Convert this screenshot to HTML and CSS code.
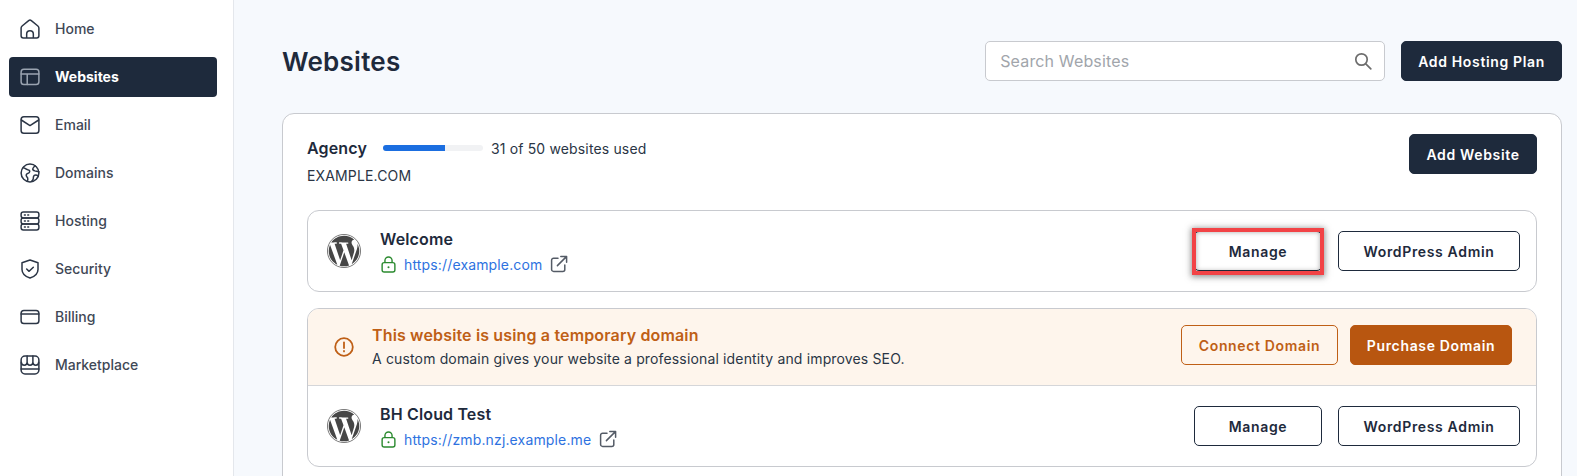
FILE: index.html
```html
<!DOCTYPE html>
<html lang="en">
<head>
<meta charset="utf-8">
<title>Websites</title>
<link rel="stylesheet" href="styles.css">
</head>
<body>
<svg class="sprite" aria-hidden="true">
  <symbol id="wp" viewBox="0 0 24 24"><circle cx="12" cy="12" r="11.700" fill="none" stroke="currentColor" stroke-width=".5"/><path fill="currentColor" d="M21.469 6.825c.84 1.537 1.318 3.3 1.318 5.175 0 3.979-2.156 7.456-5.363 9.325l3.295-9.527c.615-1.54.82-2.771.82-3.864 0-.405-.026-.78-.07-1.11m-7.981.105c.647-.03 1.232-.105 1.232-.105.582-.075.514-.93-.067-.899 0 0-1.755.135-2.88.135-1.064 0-2.85-.15-2.85-.15-.585-.03-.661.855-.075.885 0 0 .54.061 1.125.09l1.68 4.605-2.37 7.08L5.354 6.9c.649-.03 1.234-.1 1.234-.1.585-.075.516-.93-.065-.896 0 0-1.746.138-2.874.138-.2 0-.438-.008-.69-.015C4.911 3.15 8.235 1.215 12 1.215c2.809 0 5.365 1.072 7.286 2.833-.046-.003-.091-.009-.141-.009-1.06 0-1.812.923-1.812 1.914 0 .89.513 1.643 1.06 2.531.411.72.89 1.643.89 2.977 0 .915-.354 1.994-.821 3.479l-1.075 3.585-3.9-11.61.001.014zM12 22.784c-1.059 0-2.081-.153-3.048-.437l3.237-9.406 3.315 9.087c.024.053.05.101.078.149-1.12.393-2.325.609-3.582.609M1.211 12c0-1.564.336-3.05.935-4.39L7.29 21.709C3.694 19.96 1.212 16.271 1.211 12"/></symbol>
  <symbol id="lock" viewBox="0 0 16 18"><rect x="1.200" y="7" width="13.600" height="10" rx="2.200" fill="none" stroke="currentColor" stroke-width="1.500"/><path d="M4.200 7V4.800a3.800 3.800 0 0 1 7.600 0V7" fill="none" stroke="currentColor" stroke-width="1.500"/><circle cx="8" cy="12" r="1.100" fill="currentColor"/></symbol>
  <symbol id="ext" viewBox="0 0 18 18"><path d="M8 3.200H3.600A2 2 0 0 0 1.600 5.200v9.200a2 2 0 0 0 2 2h9.200a2 2 0 0 0 2-2V10M7.400 10.600 16.400 1.600M10.800 1.400h5.800v5.800" fill="none" stroke="currentColor" stroke-width="1.500" stroke-linecap="round" stroke-linejoin="round"/></symbol>
</svg>

<div class="app">
  <aside class="sidebar">
    <nav class="nav">
      <a class="nav-item"><svg class="nav-icon" viewBox="0 0 18 18"><path d="M1 8.200c0-.8.300-1.400.9-1.900L7.800 1.400a1.900 1.900 0 0 1 2.400 0l5.900 4.900c.6.500.9 1.100.9 1.900v6.800a2 2 0 0 1-2 2H3a2 2 0 0 1-2-2ZM6 17v-3.500a3 3 0 0 1 6 0V17"/></svg><span>Home</span></a>
      <a class="nav-item active"><svg class="nav-icon" viewBox="0 0 18 18"><rect x="1" y="2" width="16" height="13.800" rx="2.500"/><path d="M1 6.200h16M6.500 6.200v9.600"/></svg><span>Websites</span></a>
      <a class="nav-item"><svg class="nav-icon" viewBox="0 0 18 18"><rect x="1" y="1.500" width="16" height="15" rx="2.500"/><path d="m1.200 4.500 7.800 5 7.800-5"/></svg><span>Email</span></a>
      <a class="nav-item"><svg class="nav-icon" viewBox="0 0 18 18"><circle cx="9" cy="9" r="8"/><path d="M2.800 4c1.500.6 2.600 1.700 4.200 2 1.600.2 2.200 1.200 1.400 2.400-.7 1.100-2.400 1-2.800 2.300-.3 1.200.8 1.700 1.300 2.700.3.800.1 1.900-.3 3M13.600 2.500c-1 1.100-1.800 1.600-2.100 2.800-.2 1 .8 1.500 1.900 1.800 1.300.3 2.400.3 3.600.7M16.500 11.800c-1.200-.9-2.900-1.300-3.900-.4-1 1-.3 2-.8 3.200-.2.700-.8 1.300-1.300 1.800"/></svg><span>Domains</span></a>
      <a class="nav-item"><svg class="nav-icon" viewBox="0 0 18 18"><rect x="1" y="1" width="16" height="5.300" rx="2"/><rect x="1" y="6.300" width="16" height="5.400" rx="2"/><rect x="1" y="11.700" width="16" height="5.300" rx="2"/><path d="M4 3.600h.8M7 3.600h.8M4 9h.8M7 9h.8M4 14.400h.8M7 14.400h.8"/></svg><span>Hosting</span></a>
      <a class="nav-item"><svg class="nav-icon" viewBox="0 0 18 18"><path d="M9 .9 16.200 3.400v6c0 3.800-3 6.300-7.200 7.700-4.200-1.400-7.200-3.900-7.200-7.700v-6Z"/><path d="m6 9 2.200 2.100L12 7.400"/></svg><span>Security</span></a>
      <a class="nav-item"><svg class="nav-icon" viewBox="0 0 18 18"><rect x="1" y="3.200" width="16" height="11.600" rx="2.500"/><path d="M1 6.400h16"/></svg><span>Billing</span></a>
      <a class="nav-item"><svg class="nav-icon" viewBox="0 0 18 18"><rect x="1" y="1" width="16" height="16" rx="3.500"/><path d="M1.200 6.600a2.600 2.600 0 0 0 5.200 0 2.600 2.600 0 0 0 5.200 0 2.600 2.600 0 0 0 5.200 0M6.400 1v5.600M11.600 1v5.600M1 12.500h16"/></svg><span>Marketplace</span></a>
    </nav>
  </aside>

  <main class="main">
    <header class="page-head">
      <h1 class="page-title">Websites</h1>
      <div class="head-actions">
        <div class="search">
          <span class="search-text">Search Websites</span>
          <svg class="search-icon" viewBox="0 0 18 18"><circle cx="7.500" cy="7.500" r="5.700"/><path d="m11.800 11.800 5 5"/></svg>
        </div>
        <button class="btn btn-dark">Add Hosting Plan</button>
      </div>
    </header>

    <section class="plan">
      <div class="plan-head">
        <div class="plan-info">
          <div class="plan-usage">
            <strong class="plan-name">Agency</strong>
            <span class="bar"><span class="bar-fill"></span></span>
            <span class="usage-text">31 of 50 websites used</span>
          </div>
          <div class="plan-domain">EXAMPLE.COM</div>
        </div>
        <button class="btn btn-dark btn-wide">Add Website</button>
      </div>

      <article class="site site-open">
        <div class="site-row">
          <svg class="wp-logo"><use href="#wp"/></svg>
          <div class="site-info">
            <div class="site-name">Welcome</div>
            <div class="site-url">
              <svg class="lock"><use href="#lock"/></svg>
              <a class="url">https://example.com</a>
              <svg class="ext"><use href="#ext"/></svg>
            </div>
          </div>
          <div class="site-actions">
            <button class="btn btn-line btn-wide btn-marked">Manage</button>
            <button class="btn btn-line btn-admin">WordPress Admin</button>
          </div>
        </div>
      </article>

      <article class="site">
        <div class="notice">
          <svg class="notice-icon" viewBox="0 0 20 20"><circle cx="10" cy="10" r="8.800"/><path d="M10 5.500v5.500"/><path d="M10 14v.4"/></svg>
          <div class="notice-text">
            <div class="notice-title">This website is using a temporary domain</div>
            <div class="notice-sub">A custom domain gives your website a professional identity and improves SEO.</div>
          </div>
          <div class="notice-actions">
            <button class="btn btn-orange-line">Connect Domain</button>
            <button class="btn btn-orange">Purchase Domain</button>
          </div>
        </div>
        <div class="site-row">
          <svg class="wp-logo"><use href="#wp"/></svg>
          <div class="site-info">
            <div class="site-name">BH Cloud Test</div>
            <div class="site-url">
              <svg class="lock"><use href="#lock"/></svg>
              <a class="url">https://zmb.nzj.example.me</a>
              <svg class="ext"><use href="#ext"/></svg>
            </div>
          </div>
          <div class="site-actions">
            <button class="btn btn-line btn-wide">Manage</button>
            <button class="btn btn-line btn-admin">WordPress Admin</button>
          </div>
        </div>
      </article>
    </section>
  </main>
</div>
</body>
</html>
```

FILE: styles.css
```css
* { box-sizing: border-box; }
html, body { margin: 0; height: 476px; overflow: hidden; }
body {
  font-family: Inter, "Liberation Sans", sans-serif;
  color: #1e2a3c;
  background: #f6f9fd;
  letter-spacing: .15px;
}
.sprite { display: none; }
.app { display: flex; height: 476px; overflow: hidden; }

.sidebar {
  flex: 0 0 234px;
  background: #fff;
  border-right: 1px solid #e4e7ec;
  padding: 9px 16px 0 9px;
}
.nav { display: flex; flex-direction: column; gap: 8px; }
.nav-item {
  display: flex;
  align-items: center;
  gap: 15px;
  height: 40px;
  padding-left: 11px;
  border-radius: 4px;
  font-size: 14px;
  font-weight: 500;
  letter-spacing: 0;
  color: #3f4856;
}
.nav-item span { margin-bottom: 2px; }
.nav-icon {
  width: 20px;
  height: 20px;
  flex: none;
  fill: none;
  stroke: #2c3646;
  stroke-width: 1.350;
  stroke-linecap: round;
  stroke-linejoin: round;
}
.active { background: #1e2a3c; color: #fff; font-weight: 700; }
.active .nav-icon { stroke: #9aa3b0; }

.main { flex: 1; padding: 41px 15px 0 48px; min-width: 0; }
.page-head { display: flex; justify-content: space-between; align-items: center; height: 40px; }
.page-title { margin: 2px 0 0; font-size: 26px; line-height: 38px; font-weight: 600; letter-spacing: .25px; color: #1e2a3c; }
.head-actions { display: flex; gap: 16px; }
.search {
  display: flex;
  align-items: center;
  justify-content: space-between;
  width: 400px;
  height: 40px;
  padding: 0 12px 0 14px;
  background: #fff;
  border: 1px solid #c8cacf;
  border-radius: 5px;
}
.search-text { font-size: 16px; color: #a1a5ab; }
.search-icon { width: 18px; height: 18px; fill: none; stroke: #6d6d6d; stroke-width: 1.700; stroke-linecap: round; }

.btn {
  height: 40px;
  padding: 0 16px;
  border-radius: 5px;
  font-family: inherit;
  font-size: 14px;
  font-weight: 600;
  letter-spacing: .65px;
  white-space: nowrap;
}
.btn-dark { background: #1e2a3c; border: 1px solid #1e2a3c; color: #fff; }
.btn-wide { width: 128px; }
.btn-line { background: #fff; border: 1px solid #1e2a3c; color: #1e2a3c; padding: 0 12px; }
.btn-admin { width: 182px; }
.btn-orange-line { background: transparent; border: 1px solid #bf5f16; color: #bf5f16; width: 157px; padding: 0; }
.btn-orange { background: #b85610; border: 1px solid #b85610; color: #fff; width: 162px; padding: 0; }
.btn-marked { position: relative; }
.btn-marked::after {
  content: "";
  position: absolute;
  inset: -4px -3px -5px;
  border: 4px solid #f24346;
  box-shadow: 0 1px 6px 1px rgba(40, 40, 40, .5), inset 0 0 5px rgba(40, 40, 40, .4);
}

.plan {
  margin-top: 32px;
  height: 420px;
  padding: 20px 24px;
  background: #fff;
  border: 1px solid #c8cacf;
  border-radius: 12px;
}
.plan-head { display: flex; justify-content: space-between; align-items: flex-start; height: 40px; margin-bottom: 36px; }
.plan-usage { display: flex; align-items: center; height: 28px; }
.plan-name { font-size: 16px; font-weight: 600; width: 76px; }
.bar { width: 100px; height: 6px; border-radius: 3px; background: #f1f2f4; overflow: hidden; }
.bar-fill { display: block; width: 62%; height: 100%; background: #1b6ee0; }
.usage-text { margin-left: 8px; font-size: 14px; color: #2a3545; }
.plan-domain { margin-top: 3px; font-size: 14px; line-height: 22px; color: #2a3545; }

.site { border: 1px solid #c8cacf; border-radius: 12px; overflow: hidden; margin-bottom: 16px; }
.site-open { overflow: visible; }
.site-row { display: flex; align-items: center; padding: 17px 16px 17px 19px; }
.wp-logo { width: 34px; height: 34px; color: #464646; flex: none; }
.site-info { margin-left: 19px; flex: 1; }
.site-name { font-size: 16px; font-weight: 600; line-height: 22px; color: #1e2a3c; }
.site-url { display: flex; align-items: center; margin-top: 4px; height: 20px; }
.lock { width: 15px; height: 17px; color: #2b8a2f; margin: 0 8px 0 1px; }
.url { font-size: 14px; color: #2e72df; }
.ext { width: 18px; height: 18px; color: #545b66; margin-left: 8px; }
.site-actions { display: flex; gap: 16px; }

.notice {
  display: flex;
  align-items: center;
  padding: 15px 24px 15px 26px;
  background: #fef5ec;
  border-bottom: 1px solid #d5d6d9;
}
.notice-icon { width: 20px; height: 20px; fill: none; stroke: #bf5f16; stroke-width: 1.800; stroke-linecap: round; flex: none; }
.notice-text { margin-left: 18px; flex: 1; }
.notice-title { font-size: 16px; line-height: 22px; font-weight: 600; color: #bf5f16; }
.notice-sub { font-size: 14px; line-height: 22px; margin-top: 2px; color: #2a3545; }
.notice-actions { display: flex; gap: 12px; align-self: flex-start; margin-top: 1px; }
```
